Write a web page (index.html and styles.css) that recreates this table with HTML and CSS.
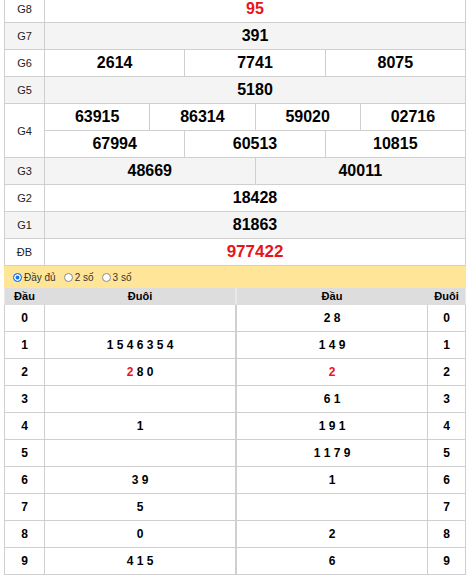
FILE: index.html
```html
<!DOCTYPE html>
<html lang="vi">
<head>
<meta charset="utf-8">
<title>KQ</title>
<link rel="stylesheet" href="styles.css">
</head>
<body>
<div class="page">
  <div class="topline"></div>
  <div class="kq">
    <div class="row"><div class="lbl">G8</div><div class="cells"><div class="c red">95</div></div></div>
    <div class="row alt"><div class="lbl">G7</div><div class="cells"><div class="c">391</div></div></div>
    <div class="row"><div class="lbl">G6</div><div class="cells"><div class="c">2614</div><div class="c">7741</div><div class="c">8075</div></div></div>
    <div class="row alt"><div class="lbl">G5</div><div class="cells"><div class="c">5180</div></div></div>
    <div class="row"><div class="lbl">G4</div>
      <div class="cells stack">
        <div class="sub"><div class="c">63915</div><div class="c">86314</div><div class="c">59020</div><div class="c">02716</div></div>
        <div class="sub"><div class="c">67994</div><div class="c">60513</div><div class="c">10815</div></div>
      </div>
    </div>
    <div class="row alt"><div class="lbl">G3</div><div class="cells"><div class="c">48669</div><div class="c">40011</div></div></div>
    <div class="row"><div class="lbl">G2</div><div class="cells"><div class="c">18428</div></div></div>
    <div class="row alt"><div class="lbl">G1</div><div class="cells"><div class="c">81863</div></div></div>
    <div class="row"><div class="lbl">ĐB</div><div class="cells"><div class="c red db">977422</div></div></div>
  </div>

  <div class="opts">
    <span class="opt"><span class="radio on"></span>Đầy đủ</span>
    <span class="opt"><span class="radio"></span>2 số</span>
    <span class="opt"><span class="radio"></span>3 số</span>
  </div>

  <div class="loto">
    <div class="lt left">
      <div class="lr hd"><div class="h">Đầu</div><div class="t">Đuôi</div></div>
      <div class="lr"><div class="h">0</div><div class="t"></div></div>
      <div class="lr"><div class="h">1</div><div class="t">1 5 4 6 3 5 4</div></div>
      <div class="lr"><div class="h">2</div><div class="t"><span class="red">2</span> 8 0</div></div>
      <div class="lr"><div class="h">3</div><div class="t"></div></div>
      <div class="lr"><div class="h">4</div><div class="t">1</div></div>
      <div class="lr"><div class="h">5</div><div class="t"></div></div>
      <div class="lr"><div class="h">6</div><div class="t">3 9</div></div>
      <div class="lr"><div class="h">7</div><div class="t">5</div></div>
      <div class="lr"><div class="h">8</div><div class="t">0</div></div>
      <div class="lr"><div class="h">9</div><div class="t">4 1 5</div></div>
    </div>
    <div class="lt right">
      <div class="lr hd"><div class="t">Đầu</div><div class="h">Đuôi</div></div>
      <div class="lr"><div class="t">2 8</div><div class="h">0</div></div>
      <div class="lr"><div class="t">1 4 9</div><div class="h">1</div></div>
      <div class="lr"><div class="t"><span class="red">2</span></div><div class="h">2</div></div>
      <div class="lr"><div class="t">6 1</div><div class="h">3</div></div>
      <div class="lr"><div class="t">1 9 1</div><div class="h">4</div></div>
      <div class="lr"><div class="t">1 1 7 9</div><div class="h">5</div></div>
      <div class="lr"><div class="t">1</div><div class="h">6</div></div>
      <div class="lr"><div class="t"></div><div class="h">7</div></div>
      <div class="lr"><div class="t">2</div><div class="h">8</div></div>
      <div class="lr"><div class="t">6</div><div class="h">9</div></div>
    </div>
  </div>
</div>
</body>
</html>
```

FILE: styles.css
```css
* { box-sizing: border-box; }
html, body { margin: 0; padding: 0; background: #fff; }
body {
  font-family: "Liberation Sans", Arial, sans-serif;
  color: #000;
  overflow: hidden;
  height: 578px;
}
.page {
  position: relative;
  width: 471px;
  padding: 0 5px 0 4px;
}
.topline {
  position: absolute;
  top: 0;
  left: 2px;
  width: 464px;
  height: 1px;
  background: #e8141c;
  z-index: 2;
}
.kq {
  margin-top: -4px;
  border-left: 1px solid #cfcfcf;
}
.row {
  display: flex;
  background: #fff;
}
.row.alt { background: #f4f4f4; }
.lbl {
  width: 40px;
  flex: none;
  border-right: 1px solid #cfcfcf;
  border-bottom: 1px solid #cfcfcf;
  display: flex;
  align-items: center;
  justify-content: center;
  font-size: 11px;
  color: #222;
}
.cells {
  flex: 1;
  display: flex;
  min-width: 0;
}
.cells.stack { flex-direction: column; }
.sub { display: flex; }
.c {
  flex: 1 1 0;
  min-width: 0;
  height: 27px;
  border-right: 1px solid #cfcfcf;
  border-bottom: 1px solid #cfcfcf;
  display: flex;
  align-items: center;
  justify-content: center;
  font-size: 16px;
  font-weight: bold;
}
.red { color: #e8141c; }
.c.db { font-size: 17px; }

.opts {
  height: 22px;
  background: #ffe598;
  display: flex;
  align-items: center;
  padding-left: 9px;
  gap: 8px;
  font-size: 10px;
  color: #333;
}
.opt {
  display: inline-flex;
  align-items: center;
  gap: 2px;
}
.radio {
  width: 9px;
  height: 9px;
  border-radius: 50%;
  border: 1px solid #8a8a8a;
  background: #fff;
  display: inline-block;
}
.radio.on {
  border-color: #1a73e8;
  background: #1a73e8;
  box-shadow: inset 0 0 0 1.5px #fff;
}

.loto { display: flex; }
.lt { display: flex; flex-direction: column; }
.lt.left { width: 232px; }
.lt.right { width: 230px; }
.lr {
  display: flex;
  height: 27px;
}
.lr > div {
  display: flex;
  align-items: center;
  justify-content: center;
  border-right: 1px solid #cfcfcf;
  border-bottom: 1px solid #cfcfcf;
  font-size: 12px;
  font-weight: bold;
  white-space: pre;
}
.lr > div:first-child { border-left: 1px solid #cfcfcf; }
.left .h { width: 41px; }
.left .t { width: 191px; }
.right .t { width: 192px; }
.right .h { width: 38px; }
.lr.hd {
  height: 17px;
  background: #dddddd;
}
.lr.hd > div {
  font-size: 11px;
  border-bottom-color: #dddddd;
  border-right-color: #dddddd;
}
.lr.hd > div:first-child { border-left-color: #e9e9e9; }
.lr.hd > div:last-child { border-right-color: #e9e9e9; }
```
